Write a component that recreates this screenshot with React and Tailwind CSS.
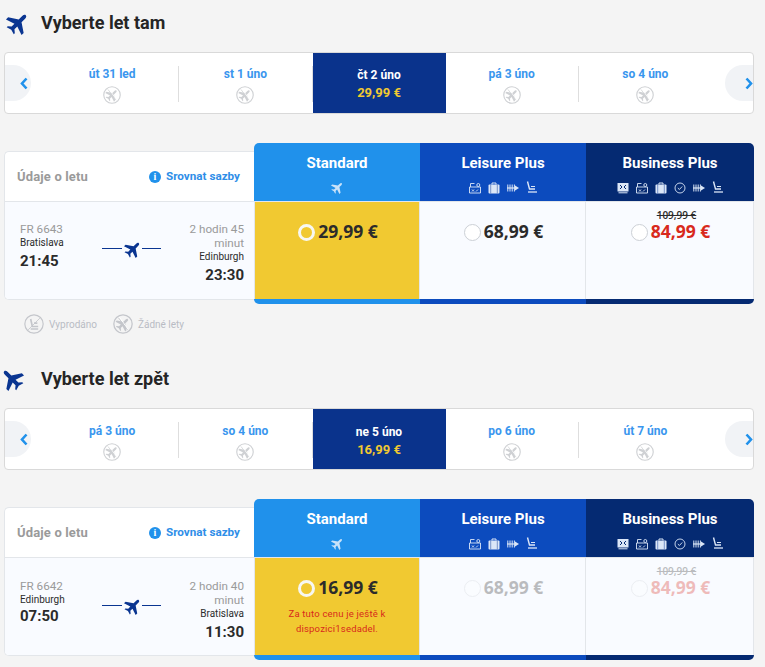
const PLANE = "M12 1c1.2 0 2 1.2 2 3v5l9 6v3l-9-3v4l3 2.5V23l-5-1.500L7 23v-1.500l3-2.500v-4l-9 3v-3l9-6V4c0-1.800.8-3 2-3z";

function Plane({ size = 20, angle = 45, color = "#0a3591", className = "" }) {
  return (
    <svg width={size} height={size} viewBox="0 0 24 24" className={className} style={{ transform: `rotate(${angle}deg)` }}>
      <path d={PLANE} fill={color} />
    </svg>
  );
}

function NoFlight({ size = 18, color = "#cfd1d4" }) {
  return (
    <svg width={size} height={size} viewBox="0 0 24 24">
      <circle cx="12" cy="12" r="11" fill="none" stroke={color} strokeWidth="1.5" />
      <g transform="rotate(45 12 12) translate(3 3) scale(.75)"><path d={PLANE} fill={color} /></g>
      <path d="M7.500 3.500 18 18.500" stroke="#ffffff" strokeWidth="1.2" />
      <path d="M6.500 4.500 17.500 19" stroke={color} strokeWidth="1" />
    </svg>
  );
}

function NoSeat({ size = 20, color = "#c4c6cb" }) {
  return (
    <svg width={size} height={size} viewBox="0 0 24 24" fill="none" stroke={color}>
      <circle cx="12" cy="12" r="11" strokeWidth="1.4" />
      <path d="M8 6l2 9h7M8 18h9M12 11h4" strokeWidth="2" />
      <path d="M19 5 5 19" strokeWidth="1" />
    </svg>
  );
}

const ic = "#dbe6f7";
function IcTicket() {
  return (
    <svg width="12" height="12" viewBox="0 0 12 12">
      <rect x="0.500" y="1" width="11" height="8.500" fill={ic} />
      <path d="M3 3l2 2-2 2M9 3 7 5l2 2" stroke="#052a72" strokeWidth="1" fill="none" />
      <path d="M1.500 10.800h9" stroke={ic} strokeWidth="1" />
    </svg>
  );
}
function IcMap() {
  return (
    <svg width="12" height="12" viewBox="0 0 12 12" fill="none" stroke={ic} strokeWidth=".9">
      <path d="M.5 5h11v6H.5z" />
      <path d="M1.500 5V1.500h4" />
      <circle cx="9.300" cy="3" r="1.500" />
      <path d="M3 9.500l2-2M3 7.500l2 2M7 9.500l2-2" />
    </svg>
  );
}
function IcBag() {
  return (
    <svg width="12" height="12" viewBox="0 0 12 12">
      <path d="M4 2.500V1h4v1.500" stroke={ic} fill="none" strokeWidth="1" />
      <rect x="0.500" y="2.500" width="11" height="9" rx="1" fill={ic} />
      <path d="M2.700 2.500v9M9.300 2.500v9" stroke="#4a6fb5" strokeWidth=".7" />
    </svg>
  );
}
function IcClock() {
  return (
    <svg width="12" height="12" viewBox="0 0 12 12" fill="none" stroke={ic} strokeWidth=".9">
      <circle cx="6" cy="6" r="5" />
      <path d="M3.800 6l1.600 1.500 2.800-3" />
    </svg>
  );
}
function IcSeats() {
  return (
    <svg width="12" height="12" viewBox="0 0 12 12">
      <path d="M.8 2.500v7M3 2.500v7M5.200 2.500v7M7.400 2.500v7" stroke={ic} strokeWidth="1" />
      <path d="M0 6h8" stroke={ic} strokeWidth="1.200" />
      <path d="M8 3.500 12 6 8 8.500z" fill={ic} />
    </svg>
  );
}
function IcSeat() {
  return (
    <svg width="11" height="13" viewBox="0 0 11 13" fill="none" stroke={ic}>
      <path d="M1.500 .5 3.500 8H9" strokeWidth="1.400" />
      <path d="M5 5.500H9" strokeWidth="1" />
      <path d="M2 11h9" strokeWidth="1.300" />
    </svg>
  );
}

const FARES = [
  { name: "Standard", bg: "bg-[#2091eb]", round: "rounded-tl-[5px]", bottom: "rounded-bl-[5px]", icons: null },
  { name: "Leisure Plus", bg: "bg-[#0c4bbe]", round: "", bottom: "", icons: [IcMap, IcBag, IcSeats, IcSeat] },
  { name: "Business Plus", bg: "bg-[#052a72]", round: "rounded-tr-[5px]", bottom: "rounded-br-[5px]", icons: [IcTicket, IcMap, IcBag, IcClock, IcSeats, IcSeat] },
];

function DateCell({ label, divider, selected, price, bump }) {
  if (selected) {
    return (
      <div className={`flex w-[133px] shrink-0 flex-col items-center bg-[#0a338c] ${bump ? "pt-[14px]" : "pt-[13px]"}`}>
        <div className="text-[12px] leading-[18px] font-bold text-white">{label}</div>
        <div className="text-[13px] leading-[18px] font-bold text-[#f1c931]">{price}</div>
      </div>
    );
  }
  return (
    <div className="flex flex-1 items-center">
      <div className={`mt-[2px] flex h-9 flex-1 flex-col items-center ${bump ? "pt-[2px]" : "pt-[1px]"} ${divider ? "border-r border-[#dedede]" : ""}`}>
        <div className="text-[12px] leading-[14px] font-bold text-[#3a96ee]">{label}</div>
        <div className="mt-[5px] h-[18px]"><NoFlight /></div>
      </div>
    </div>
  );
}

function DateBar({ days, bump }) {
  return (
    <div className="flex h-[62px] items-stretch overflow-hidden rounded-[4px] border border-[#d9d9d9] bg-white">
      <div className="flex w-[41px] shrink-0 items-center">
        <div className="flex h-9 w-[26px] items-center justify-end rounded-r-full bg-[#f1f3f6] pr-[3px]">
          <svg width="8" height="13" viewBox="0 0 8 13" fill="none"><path d="M6.500 1.500 2 6.500l4.500 5" stroke="#2091eb" strokeWidth="2.600" /></svg>
        </div>
      </div>
      <div className="flex flex-1">
        {days.map((d) => <DateCell key={d.label} bump={bump} {...d} />)}
      </div>
      <div className="flex w-[41px] shrink-0 items-center justify-end">
        <div className="flex h-9 w-[28px] items-center justify-end rounded-l-full bg-[#f1f3f6]">
          <svg width="8" height="13" viewBox="0 0 8 13" fill="none"><path d="M1.500 1.500 6 6.500l-4.500 5" stroke="#2091eb" strokeWidth="2.600" /></svg>
        </div>
      </div>
    </div>
  );
}

function Radio({ selected }) {
  return selected
    ? <span className="mt-[3px] h-[17px] w-[17px] shrink-0 rounded-full border-[3px] border-[#f7f7f2] bg-[#f1c931]" />
    : <span className="mt-[3px] h-[17px] w-[17px] shrink-0 rounded-full border border-[#ccd0d6] bg-white" />;
}

const priceFont = "font-['Open_Sans',sans-serif] text-[17.5px] leading-[20px] font-bold";

function FareColumn({ fare, body, stripe, last, first }) {
  return (
    <div className={`flex flex-col flex-none ${last ? "w-[168px]" : "w-[166px]"}`}>
      <div className={`flex h-[58px] flex-col items-center ${fare.bg} ${fare.round} pt-[11px]`}>
        <div className="text-[15px] leading-[18px] font-bold text-white">{fare.name}</div>
        <div className="mt-[9px] flex h-[13px] items-center gap-[7px]">
          {fare.icons
            ? fare.icons.map((I, i) => <I key={i} />)
            : <Plane size={13} color="#c9e2f9" />}
        </div>
      </div>
      <div className={`h-[98px] border-t border-[#e3e6ea] ${first ? "border-l" : ""} border-r ${body.selected ? "bg-[#f1c931]" : "bg-[#f9fbff]"}`}>
        {body.content}
      </div>
      <div className={`h-[5px] ${stripe} ${fare.bottom}`} />
    </div>
  );
}

function PriceLine({ selected, children, red, old, faded }) {
  return (
    <div className={`flex flex-col items-center pl-[2px] ${faded ? "opacity-30" : ""}`}>
      <div className={`${old ? "pt-[7px]" : "pt-[19px]"}`}>
        {old && <div className="pl-[12px] text-center font-['Open_Sans',sans-serif] text-[10px] leading-[12px] font-semibold text-[#2b2b2b] line-through">{old}</div>}
        <div className="flex items-start gap-[3px]">
          <Radio selected={selected} />
          <span className={`${priceFont} ${red ? "text-[#d8291c]" : "text-[#2b2b2b]"}`}>{children}</span>
        </div>
      </div>
    </div>
  );
}

function Flight({ code, from, dep, duration, to, arr, pt, tight }) {
  return (
    <div className={`flex h-[97px] bg-[#f9fbff] pl-[15px] ${pt}`}>
      <div className="w-[82px] shrink-0">
        <div className="text-[11.7px] leading-[14px] text-[#9a9a9a]">{code}</div>
        <div className="text-[10px] leading-[14px] text-[#2b2b2b]">{from}</div>
        <div className={`${tight ? "" : "mt-[2px]"} text-[15px] leading-[18px] font-bold text-[#2b2b2b]`}>{dep}</div>
      </div>
      <div className="flex h-[52px] w-[59px] shrink-0 items-center justify-between">
        <span className="h-px w-[20px] bg-[#0a3591]" />
        <span className="mt-[2px] ml-[2px] flex"><Plane size={18} /></span>
        <span className="h-px w-[19px] bg-[#0a3591]" />
      </div>
      <div className="flex w-[83px] shrink-0 flex-col items-end text-right">
        <div className="w-[64px] text-[11.7px] leading-[14px] text-[#9a9a9a]">{duration}</div>
        <div className="text-[10px] leading-[14px] text-[#2b2b2b]">{to}</div>
        <div className="mt-[2px] text-[15px] leading-[19px] font-bold text-[#2b2b2b]">{arr}</div>
      </div>
    </div>
  );
}

function Section({ title, angle, planeClass, days, flight, bodies, bump }) {
  return (
    <section>
      <div className="flex h-6 items-center">
        <div className={`flex w-[37px] shrink-0 ${planeClass}`}><Plane size={24} angle={angle} /></div>
        <h2 className="text-[18px] leading-6 font-bold text-[#252525]">{title}</h2>
      </div>
      <div className="mt-[17px]"><DateBar days={days} bump={bump} /></div>
      <div className="mt-[29px] flex">
        <div className="mt-2 mb-1 w-[250px] shrink-0 overflow-hidden rounded-l-[5px] border border-r-0 border-[#e3e6ea] bg-white">
          <div className="flex h-[50px] items-center justify-between border-b border-[#e3e6ea] pt-[1px] pr-[14px] pl-[12px]">
            <span className="text-[13px] tracking-[0.15px] font-bold text-[#9a9a9a]">Údaje o letu</span>
            <span className="flex items-center gap-[5px]">
              <span className="flex h-[12px] w-[12px] items-center justify-center rounded-full bg-[#2091eb] font-['Liberation_Serif',serif] text-[10px] leading-none font-bold text-white">i</span>
              <span className="text-[11.7px] font-bold text-[#2f8ee8]">Srovnat sazby</span>
            </span>
          </div>
          <Flight {...flight} />
        </div>
        {FARES.map((f, i) => (
          <FareColumn key={f.name} fare={f} body={bodies[i]} stripe={f.bg} first={i === 0} last={i === 2} />
        ))}
      </div>
    </section>
  );
}

const noFl = (label, divider) => ({ label, divider });

export default function App() {
  return (
    <div className="min-h-[667px] overflow-hidden bg-[#f4f4f4] pt-[11px] pr-[11px] pl-[4px] font-['Roboto',sans-serif]">
      <Section
        title="Vyberte let tam"
        angle={45}
        planeClass="pl-[2px]"
        days={[
          noFl("út 31 led", true),
          noFl("st 1 úno", true),
          { label: "čt 2 úno", selected: true, price: "29,99 €" },
          noFl("pá 3 úno", true),
          noFl("so 4 úno", false),
        ]}
        flight={{ code: "FR 6643", from: "Bratislava", dep: "21:45", duration: "2 hodin 45 minut", to: "Edinburgh", arr: "23:30", pt: "pt-[20px]" }}
        bodies={[
          { selected: true, content: <PriceLine selected>29,99 €</PriceLine> },
          { content: <PriceLine>68,99 €</PriceLine> },
          { content: <PriceLine red old="109,99 €">84,99 €</PriceLine> },
        ]}
      />
      <div className="mt-[10px] flex h-5 items-center pl-[20px] text-[10px] text-[#b9bcc4]">
        <NoSeat />
        <span className="ml-[5px]">Vyprodáno</span>
        <span className="ml-[16px]"><NoFlight size={20} color="#c4c6cb" /></span>
        <span className="ml-[5px]">Žádné lety</span>
      </div>
      <div className="mt-[33px]">
        <Section
          title="Vyberte let zpět"
          angle={-45}
          planeClass="-ml-[4px] mr-[4px]"
          bump
          days={[
            noFl("pá 3 úno", true),
            noFl("so 4 úno", true),
            { label: "ne 5 úno", selected: true, price: "16,99 €" },
            noFl("po 6 úno", true),
            noFl("út 7 úno", false),
          ]}
          flight={{ code: "FR 6642", from: "Edinburgh", dep: "07:50", duration: "2 hodin 40 minut", to: "Bratislava", arr: "11:30", pt: "pt-[21px]", tight: true }}
          bodies={[
            {
              selected: true,
              content: (
                <div>
                  <PriceLine selected>16,99 €</PriceLine>
                  <p className="mx-auto mt-[9px] w-[110px] text-center text-[9.5px] leading-[15px] tracking-[0.2px] text-[#d8291c]">Za tuto cenu je ještě k dispozici1sedadel.</p>
                </div>
              ),
            },
            { content: <PriceLine faded>68,99 €</PriceLine> },
            { content: <PriceLine faded red old="109,99 €">84,99 €</PriceLine> },
          ]}
        />
      </div>
    </div>
  );
}
